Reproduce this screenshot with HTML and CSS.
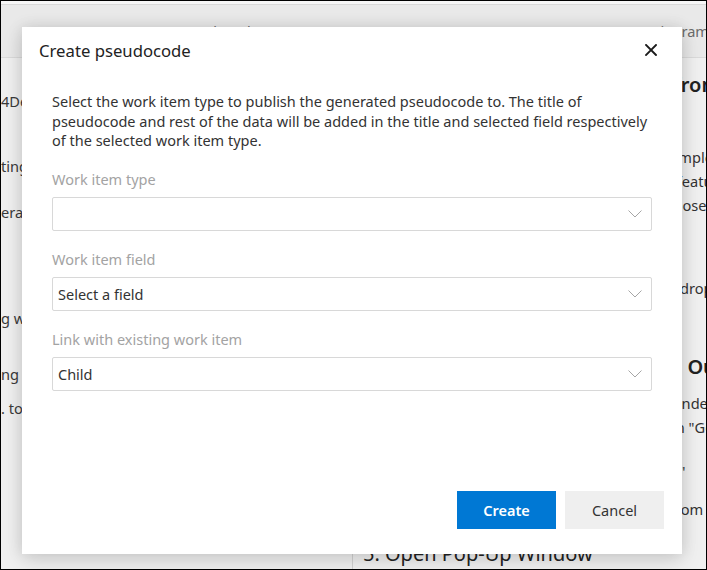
FILE: index.html
```html
<!DOCTYPE html>
<html lang="en">
<head>
<meta charset="utf-8">
<title>Create pseudocode</title>
<link rel="stylesheet" href="styles.css">
</head>
<body>
<div class="frame">
  <header class="topbar">
    <nav class="tabs">
      <span class="tab">Summary</span>
      <span class="tab">Pseudocode</span>
      <span class="tab">Test cases</span>
      <span class="tab tab-last">Diagram</span>
    </nav>
  </header>
  <div class="main">
    <aside class="side">
      <p class="side-line l1">4DevOps project settings</p>
      <p class="side-line l2">ting up the extension</p>
      <p class="side-line l3">erate pseudocode</p>
      <p class="side-line l4">g work items</p>
      <p class="side-line l5">ng in the editor</p>
      <p class="side-line l6">. to publish</p>
    </aside>
    <section class="content">
      <h2 class="doc-h h-first">3. Generating Your Pseudocode from Code</h2>
      <p class="doc-p p-first">This section below shows how to generate a simple<br>for the selected code using the context menu feature<br>options of the extension in the editor, then choose the</p>
      <p class="doc-p p-second">Choose the required script language from the dropdown</p>
      <h2 class="doc-h h-second">4. Publishing Pseudocode via the Output</h2>
      <p class="doc-p p-third">Once your pseudocode has been created, go under<br>the pseudocode output and click on the button "Go</p>
      <p class="doc-p p-quote">and select the required values in the dialog to "</p>
      <p class="doc-p p-fourth">Choose the required work-item type, or field from the list</p>
      <h2 class="doc-h h-third">5. Open Pop-Up Window</h2>
    </section>
  </div>

  <div class="overlay">
    <div class="dialog" role="dialog" aria-label="Create pseudocode">
      <div class="dialog-head">
        <h1 class="dialog-title">Create pseudocode</h1>
        <button class="close" aria-label="Close">
          <svg width="12" height="12" viewBox="0 0 12 12"><path d="M1 1 L11 11 M11 1 L1 11" stroke="#1b1b1b" stroke-width="1.9" stroke-linecap="square" fill="none"/></svg>
        </button>
      </div>
      <p class="dialog-desc">Select the work item type to publish the generated pseudocode to. The title of pseudocode and rest of the data will be added in the title and selected field respectively of the selected work item type.</p>

      <div class="field">
        <label class="field-label">Work item type</label>
        <div class="select">
          <span class="select-value"></span>
          <svg class="chev" width="14" height="8" viewBox="0 0 14 8"><path d="M0.5 0.5 L7 7 L13.5 0.5" stroke="#a6a6a6" stroke-width="1" fill="none"/></svg>
        </div>
      </div>
      <div class="field">
        <label class="field-label">Work item field</label>
        <div class="select">
          <span class="select-value">Select a field</span>
          <svg class="chev" width="14" height="8" viewBox="0 0 14 8"><path d="M0.5 0.5 L7 7 L13.5 0.5" stroke="#a6a6a6" stroke-width="1" fill="none"/></svg>
        </div>
      </div>
      <div class="field">
        <label class="field-label">Link with existing work item</label>
        <div class="select">
          <span class="select-value">Child</span>
          <svg class="chev" width="14" height="8" viewBox="0 0 14 8"><path d="M0.5 0.5 L7 7 L13.5 0.5" stroke="#a6a6a6" stroke-width="1" fill="none"/></svg>
        </div>
      </div>

      <div class="dialog-foot">
        <button class="btn btn-primary">Create</button>
        <button class="btn btn-default">Cancel</button>
      </div>
    </div>
  </div>
</div>
</body>
</html>
```

FILE: styles.css
```css
* { box-sizing: border-box; }

html, body {
  margin: 0;
  padding: 0;
}

body {
  width: 707px;
  height: 570px;
  overflow: hidden;
  font-family: "Noto Sans", "Open Sans", "DejaVu Sans", sans-serif;
  color: #333;
}

.frame {
  position: relative;
  width: 707px;
  height: 570px;
  border: 1px solid #000;
  background: #f0f0f0;
  overflow: hidden;
  display: flex;
  flex-direction: column;
}

/* ---------- background page ---------- */
.topbar {
  flex: 0 0 57px;
  background: #e9e9e9;
  border-top: 3px solid #f6f6f6;
  border-bottom: 1px solid #dadada;
  box-shadow: inset 0 1px 0 #d9d9d9;
}

.tabs {
  display: flex;
  padding: 17px 0 0 90px;
  font-size: 14.6px;
  line-height: 20px;
  color: #6b6b6b;
  white-space: nowrap;
}

.tab { margin-right: 18px; }
.tab-last { margin-left: auto; margin-right: -3px; }

.main {
  flex: 1;
  display: flex;
  min-height: 0;
}

.side {
  flex: 0 0 351px;
  padding-top: 33px;
  overflow: hidden;
}

.side-line {
  margin: 0;
  font-size: 14.6px;
  line-height: 20px;
  color: #3a3a3a;
  white-space: nowrap;
}
.l2 { margin-top: 45px; }
.l3 { margin-top: 26px; }
.l4 { margin-top: 86px; }
.l5 { margin-top: 36px; }
.l6 { margin-top: 14px; }

.content {
  flex: 1;
  border-left: 1px solid #d2d2d2;
  padding: 13px 0 0 10px;
  overflow: hidden;
  white-space: nowrap;
}

.doc-h {
  margin: 0;
  font-size: 20px;
  line-height: 28px;
  font-weight: 600;
  color: #222;
}

.doc-p {
  margin: 0;
  font-size: 14.6px;
  line-height: 24px;
  color: #333;
}

.p-first { margin-top: 46px; }
.p-second { margin-top: 59px; }
.h-second { margin-top: 53px; }
.p-third { margin-top: 10px; }
.p-quote { margin-top: 20px; }
.p-fourth { margin-top: 14px; }
.h-third { margin-top: 19px; font-weight: 400; }

/* ---------- modal ---------- */
.overlay {
  position: absolute;
  inset: 0;
}

.dialog {
  margin: 26px 0 0 21px;
  width: 660px;
  height: 527px;
  background: #fff;
  box-shadow: 0 0 14px rgba(0, 0, 0, 0.13), 0 8px 22px rgba(0, 0, 0, 0.1);
  display: flex;
  flex-direction: column;
}

.dialog-head {
  display: flex;
  align-items: center;
  justify-content: space-between;
  padding: 12px 19px 0 17px;
}

.dialog-title {
  margin: 0;
  font-size: 16.7px;
  line-height: 24px;
  font-weight: 400;
  color: #222;
}

.close {
  width: 24px;
  height: 24px;
  padding: 0;
  border: 0;
  background: transparent;
  display: flex;
  align-items: center;
  justify-content: center;
  margin-top: -2px;
}

.dialog-desc {
  margin: 29px 30px 0;
  font-size: 14.5px;
  line-height: 19.5px;
  color: #333;
}

.field {
  margin: 18px 30px 0;
}

.field-label {
  display: block;
  font-size: 14.5px;
  line-height: 20px;
  color: #a3a3a3;
  margin-bottom: 8px;
}

.select {
  height: 34px;
  border: 1px solid #d8d8d8;
  border-radius: 2px;
  display: flex;
  align-items: center;
  justify-content: space-between;
  padding: 0 9px 0 5px;
  font-size: 14.5px;
  color: #333;
}

.chev { flex: 0 0 auto; }

.dialog-foot {
  margin-top: auto;
  display: flex;
  justify-content: flex-end;
  gap: 9px;
  padding: 0 18px 25px;
}

.btn {
  width: 99px;
  height: 38px;
  border: 0;
  border-radius: 0;
  font-family: inherit;
  font-size: 14.5px;
  cursor: pointer;
}

.btn-primary {
  background: #0078d4;
  color: #fff;
  font-weight: 600;
}

.btn-default {
  background: #efefef;
  color: #333;
}
```
